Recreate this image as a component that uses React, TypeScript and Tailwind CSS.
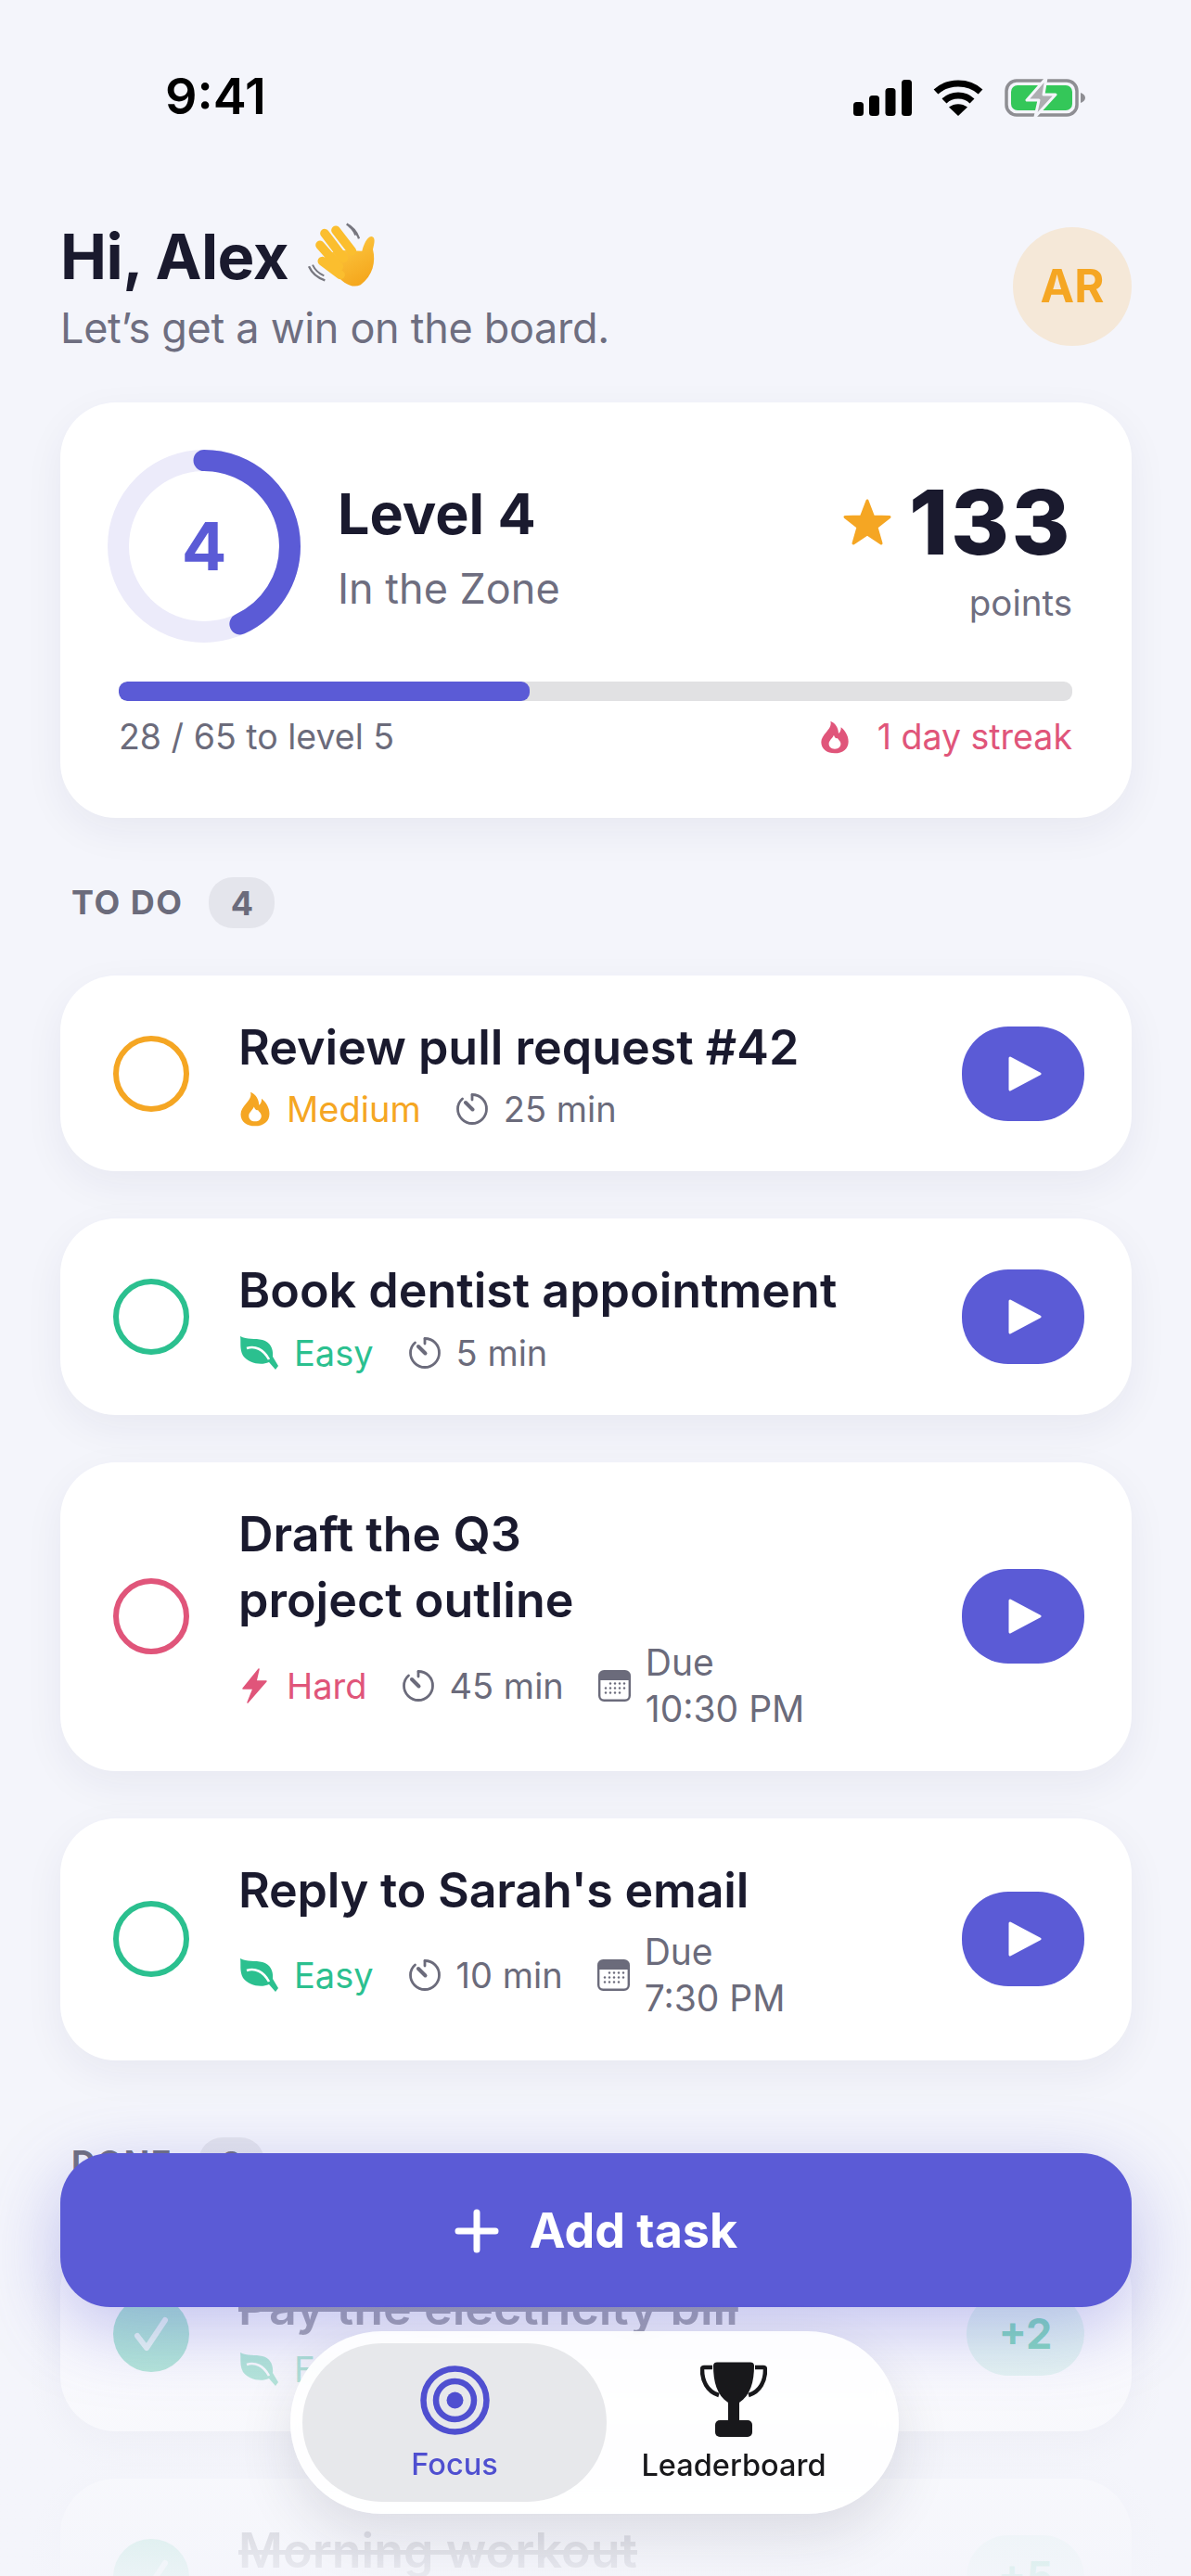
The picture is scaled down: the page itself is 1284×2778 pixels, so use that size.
import React from 'react';

const INDIGO = '#5B5BD6';

// status bar glyphs
const Signal = () => (
    <svg width="63" height="39" viewBox="0 0 63 39" fill="#000">
        <rect x="0" y="24" width="11" height="15" rx="3.5" />
        <rect x="17" y="17" width="11" height="22" rx="3.5" />
        <rect x="34.5" y="9" width="11" height="30" rx="3.5" />
        <rect x="52" y="0" width="11" height="39" rx="3.5" />
    </svg>
);

const Wifi = () => (
    <svg width="54" height="39" viewBox="0 0 54 39" fill="none" stroke="#000" strokeWidth="7">
        <path d="M3 13 C16 1 38 1 51 13" />
        <path d="M12 23 C20 15 34 15 42 23" />
        <path d="M27 39 L17 29.5 C23 25 31 25 37 29.5 Z" fill="#000" stroke="none" />
    </svg>
);

const Battery = () => (
    <svg width="88" height="44" viewBox="0 0 88 44" fill="none">
        <rect x="2" y="4" width="76" height="37" rx="11" stroke="#8E8E93" strokeWidth="3.5" />
        <rect x="7" y="9" width="66" height="27" rx="7" fill="#34C759" />
        <path d="M82 17 C85 18 87 20 87 22.5 C87 25 85 27 82 28 Z" fill="#8E8E93" />
        <path d="M45 1 L24 25 H37 L33 43 L55 19 H42 Z" fill="#AEAEB2" stroke="#F4F5FB" strokeWidth="3" strokeLinejoin="round" />
    </svg>
);

const WaveHand = () => (
    <svg width="100" height="100" viewBox="0 0 300 300" fill="none" className="ml-[11px] shrink-0">
        <defs>
            <linearGradient id="hand" x1="0" y1="0" x2="0.6" y2="1">
                <stop offset="0" stopColor="#FFD04A" />
                <stop offset="1" stopColor="#F5A81E" />
            </linearGradient>
        </defs>
        <path d="M155 8 C175 18 188 35 195 55" stroke="#77777f" strokeWidth="7" />
        <path d="M33 145 C42 165 60 182 85 190" stroke="#77777f" strokeWidth="7" />
        <path d="M45 140 C52 155 65 168 82 175" stroke="#77777f" strokeWidth="6" />
        <path d="M162 14 C172 22 180 32 184 44" stroke="#77777f" strokeWidth="6" />
        <path
            d="M120 92 L205 95 C210 75 220 50 235 48 C250 50 245 70 240 90 C250 130 240 175 200 205 C170 218 140 195 120 170 L70 125 Z"
            fill="url(#hand)"
        />
        <g stroke="#FBBE2E" strokeWidth="29" strokeLinecap="round">
            <line x1="120" y1="28" x2="172" y2="95" />
            <line x1="84" y1="38" x2="145" y2="118" />
            <line x1="69" y1="76" x2="130" y2="145" />
            <line x1="76" y1="128" x2="135" y2="172" />
        </g>
    </svg>
);

// meta icons
const Flame = ({ color, w = 36, h = 40 }: { color: string; w?: number; h?: number }) => (
    <svg width={w} height={h} viewBox="0 0 24 27" className="shrink-0">
        <path
            fillRule="evenodd"
            fill={color}
            d="M8.5 0.5 C9.5 4 7.5 6.5 5 9.5 C2.8 12.2 1 14.5 1 17.5 C1 23 5.5 26.5 12 26.5 C18.5 26.5 23 23 23 17 C23 12 20 8 17 5.5 C17 8 16.5 9.5 15 10.5 C15 6 12.5 2 8.5 0.5 Z M12 23 C9 23 7.2 21.2 7.2 18.8 C7.2 16.2 9.8 14.8 11.2 11.8 C12 14.2 13.2 14.8 14.2 14.2 C14.4 15.2 16.8 16.5 16.8 18.8 C16.8 21.2 15 23 12 23 Z"
        />
    </svg>
);

const Leaf = ({ color }: { color: string }) => (
    <svg width="44" height="38" viewBox="0 0 44 38" className="shrink-0">
        <path
            fill={color}
            d="M2 1 C9 5 18 3 26 5 C34 7 38 14 37 23 L43 33 L40 37 L33 29 C24 33 11 30 5 22 C1 15 3 7 2 1 Z"
        />
        <path d="M9 14 C18 11 27 15 33 26" stroke="#fff" strokeWidth="2.6" fill="none" />
    </svg>
);

const Bolt = ({ color }: { color: string }) => (
    <svg width="36" height="38" viewBox="0 0 36 38" className="shrink-0">
        <path
            fill={color}
            stroke={color}
            strokeWidth="1.5"
            strokeLinejoin="round"
            d="M22 1 L5 22 H16 L10 37 L30 14 H19 Z"
        />
    </svg>
);

const Timer = () => (
    <svg width="36" height="36" viewBox="0 0 36 36" fill="none" stroke="#6B6B7B" className="shrink-0">
        <path d="M18 2.5 C27 2.5 33.5 9.5 33.5 18 C33.5 26.5 26.5 33.5 18 33.5 C9.5 33.5 2.5 26.5 2.5 18 C2.5 13.5 4.5 9.5 7.5 7" strokeWidth="2.8" strokeLinecap="round" />
        <path d="M18 3 V8" strokeWidth="2.8" strokeLinecap="round" />
        <path d="M11 11 L18.5 18.5" strokeWidth="4" strokeLinecap="round" />
    </svg>
);

const CalendarIcon = () => (
    <svg width="35" height="34" viewBox="0 0 35 34" className="shrink-0">
        <rect x="1.2" y="1.2" width="32.6" height="31.6" rx="5" fill="#fff" stroke="#6B6B7B" strokeWidth="2.4" />
        <path d="M1.2 11 V6 C1.2 3 3 1.2 6 1.2 H29 C32 1.2 33.8 3 33.8 6 V11 Z" fill="#6B6B7B" />
        <g fill="#6B6B7B">
            {[14.5, 19.5, 24.5].map(y =>
                [8, 13, 18, 23, 28].map(x => (y === 14.5 && x === 8) || (y === 24.5 && x === 28) ? null : <circle key={`${x}-${y}`} cx={x} cy={y} r="1.2" />)
            )}
        </g>
    </svg>
);

const Play = () => (
    <svg width="36" height="40" viewBox="0 0 36 40" className="ml-[4px]">
        <path d="M2 3 L34 20 L2 37 Z" fill="#fff" stroke="#fff" strokeWidth="3" strokeLinejoin="round" />
    </svg>
);

const Meta = ({ icon, children, color }: { icon: React.ReactNode; children: React.ReactNode; color?: string }) => (
    <div className="flex items-center gap-[16px]" style={color ? { color } : undefined}>
        {icon}
        <span>{children}</span>
    </div>
);

interface TaskProps {
    ring: string;
    title: React.ReactNode;
    icon: React.ReactNode;
    level: string;
    levelColor: string;
    mins: string;
    due?: string;
}

const TaskCard = ({ ring, title, icon, level, levelColor, mins, due }: TaskProps) => (
    <div className="flex items-center rounded-[60px] bg-white pl-[57px] pr-[51px] py-[42px] shadow-[0_14px_44px_rgba(40,40,90,0.06)]">
        <div className="h-[82px] w-[82px] shrink-0 rounded-full border-[6px]" style={{ borderColor: ring }} />
        <div className="ml-[53px] min-w-0 flex-1">
            <div className="text-[52px] font-semibold leading-[71.4px] text-[#1A1A2E]">{title}</div>
            <div className="mt-[6px] flex items-center gap-[37px] text-[38px] leading-[50px] text-[#6B6B7B]">
                <Meta icon={icon} color={levelColor}>{level}</Meta>
                <Meta icon={<Timer />}>{mins}</Meta>
                {due && <Meta icon={<CalendarIcon />}><span className="text-[39px]">Due<br />{due}</span></Meta>}
            </div>
        </div>
        <button className="flex h-[102px] w-[132px] shrink-0 items-center justify-center rounded-[50px] bg-[#5B5BD6]">
            <Play />
        </button>
    </div>
);

const DoneCard = ({ title, meta, points }: { title: string; meta: string; points: string }) => (
    <div className="flex items-center rounded-[60px] bg-white/70 pl-[57px] pr-[51px] py-[42px] shadow-[0_14px_44px_rgba(40,40,90,0.06)]">
        <div className="flex h-[82px] w-[82px] shrink-0 items-center justify-center rounded-full bg-[#2BC08F]/50">
            <svg width="40" height="40" viewBox="0 0 40 40" fill="none" stroke="#fff" strokeOpacity="0.75" strokeWidth="6" strokeLinecap="round" strokeLinejoin="round">
                <path d="M5 22 L15 35 L35 5" />
            </svg>
        </div>
        <div className="ml-[53px] min-w-0 flex-1 opacity-50">
            <div className="text-[52px] font-semibold leading-[71.4px] text-[#1A1A2E] line-through">{title}</div>
            <div className="mt-[6px] flex items-center gap-[37px] text-[38px] leading-[50px] text-[#6B6B7B]">
                <Meta icon={<Leaf color="#2BC08F" />} color="#2BC08F">Easy</Meta>
                <Meta icon={<Timer />}>{meta}</Meta>
            </div>
        </div>
        <div className="flex h-[90px] w-[127px] shrink-0 items-center justify-center rounded-[45px] bg-[#2BC08F]/15 text-[45px] font-bold text-[#2BC08F]/75">
            {points}
        </div>
    </div>
);

const SectionHead = ({ label, count }: { label: string; count: number }) => (
    <div className="flex items-center pl-[12px]">
        <span className="text-[36px] font-bold leading-[55px] tracking-[1.5px] text-[#6B6B7B]">{label}</span>
        <span className="ml-[28px] flex h-[55px] w-[71px] items-center justify-center rounded-[26px] bg-[#E4E5EC] text-[36px] font-bold text-[#6B6B7B]">{count}</span>
    </div>
);

const Trophy = () => (
    <svg width="72" height="82" viewBox="0 0 72 82">
        <path d="M13 6 H4 C2.500 6 2 7 2 8.500 C2 20 7 32 20 36" fill="none" stroke="#18181B" strokeWidth="4.500" />
        <path d="M59 6 H68 C69.500 6 70 7 70 8.500 C70 20 65 32 52 36" fill="none" stroke="#18181B" strokeWidth="4.500" />
        <path d="M14 4 C14 1.500 16 0.500 18 0.500 H54 C56 0.500 58 1.500 58 4 C58 22 54 36 42 44 V66 H30 V44 C18 36 14 22 14 4 Z" fill="#18181B" />
        <rect x="16" y="63" width="40" height="18" rx="5" fill="#18181B" />
    </svg>
);

const Target = () => (
    <svg width="75" height="75" viewBox="0 0 75 75" fill="none" stroke="#4F4FD0" strokeWidth="6.500">
        <circle cx="37.500" cy="37.500" r="34" />
        <circle cx="37.500" cy="37.500" r="20.500" />
        <circle cx="37.500" cy="37.500" r="9" fill="#4F4FD0" stroke="none" />
    </svg>
);

export default function App() {
    return (
        <div className="relative h-[2778px] w-[1284px] overflow-hidden bg-[#F4F5FB] font-['Inter',sans-serif]">
            {/* Status bar */}
            <div className="flex h-[245px] items-start justify-between pl-[178px] pr-[113px] pt-[74px]">
                <span className="text-[54px] font-semibold leading-[60px] text-black">9:41</span>
                <div className="mt-[9px] flex items-center gap-[23px]">
                    <Signal />
                    <Wifi />
                    <Battery />
                </div>
            </div>

            <div className="px-[65px] pr-[64px]">
                {/* Greeting */}
                <div className="flex h-[189px] items-start justify-between">
                    <div>
                        <div className="-mt-[6px] flex h-[100px] items-start">
                            <span className="text-[67px] font-bold leading-[76px] tracking-[-0.5px] text-[#1A1A2E]">Hi, Alex</span>
                            <WaveHand />
                        </div>
                        <div className="-mt-[15px] text-[45px] leading-[60px] tracking-[-0.3px] text-[#6E6E80]">Let’s get a win on the board.</div>
                    </div>
                    <div className="flex h-[128px] w-[128px] items-center justify-center rounded-full bg-[#F5E8D8] text-[49px] font-bold text-[#F5A623]">AR</div>
                </div>

                {/* Level card */}
                <div className="rounded-[60px] bg-white pb-[62px] pl-[63px] pr-[64px] pt-[51px] shadow-[0_14px_44px_rgba(40,40,90,0.06)]">
                    <div className="flex items-center">
                        <div className="relative -ml-[12px] h-[208px] w-[208px] shrink-0">
                            <svg width="208" height="208" viewBox="0 0 208 208" fill="none" strokeWidth="23">
                                <circle cx="104" cy="104" r="92.500" stroke="#ECEBFA" />
                                <circle cx="104" cy="104" r="92.500" stroke={INDIGO} strokeLinecap="round" strokeDasharray="250 581.200" transform="rotate(-90 104 104)" />
                            </svg>
                            <div className="absolute inset-0 flex items-center justify-center text-[72px] font-bold text-[#5B5BD6]">4</div>
                        </div>
                        <div className="ml-[40px] mt-[5px] flex-1">
                            <div className="text-[61px] font-bold leading-[72px] text-[#1A1A2E]">Level 4</div>
                            <div className="mt-[15px] text-[45px] leading-[60px] text-[#6E6E80]">In the Zone</div>
                        </div>
                        <div className="mt-[10px] text-right">
                            <div className="flex items-center justify-end gap-[18px]">
                                <svg width="54" height="52" viewBox="0 0 54 52">
                                    <path d="M27 3 L33.500 20 L51 20.500 L37 31.500 L42 49 L27 39 L12 49 L17 31.500 L3 20.500 L20.500 20 Z" fill="#F5A623" stroke="#F5A623" strokeWidth="3" strokeLinejoin="round" />
                                </svg>
                                <span className="text-[96px] font-extrabold leading-[100px] tracking-[2.5px] text-[#1A1A2E]">133</span>
                            </div>
                            <div className="mt-[12px] text-[38.5px] leading-[50px] text-[#6E6E80]">points</div>
                        </div>
                    </div>
                    <div className="mt-[42px] h-[21px] overflow-hidden rounded-[9px] bg-[#E1E1E3]">
                        <div className="h-full rounded-[9px] bg-[#5B5BD6]" style={{ width: `${(443 / 1028) * 100}%` }} />
                    </div>
                    <div className="mt-[14px] flex items-center justify-between text-[37.5px] leading-[50px] text-[#6B6B7B]">
                        <span>28 / 65 to level 5</span>
                        <div className="flex items-center gap-[30px] text-[#E0557A]">
                            <Flame color="#E0557A" w={32} h={40} />
                            <span>1 day streak</span>
                        </div>
                    </div>
                </div>

                {/* To do */}
                <div className="mt-[64px]">
                    <SectionHead label="TO DO" count={4} />
                </div>
                <div className="mt-[51px] flex flex-col gap-[51px]">
                    <TaskCard ring="#F5A623" title="Review pull request #42" icon={<Flame color="#F5A623" w={36} h={38} />} level="Medium" levelColor="#F5A623" mins="25 min" />
                    <TaskCard ring="#2BC08F" title="Book dentist appointment" icon={<Leaf color="#2BC08F" />} level="Easy" levelColor="#2BC08F" mins="5 min" />
                    <TaskCard ring="#E0557A" title={<>Draft the Q3<br />project outline</>} icon={<Bolt color="#E0557A" />} level="Hard" levelColor="#E0557A" mins="45 min" due="10:30 PM" />
                    <TaskCard ring="#2BC08F" title={<span className="tracking-[-0.2px]">Reply to Sarah's email</span>} icon={<Leaf color="#2BC08F" />} level="Easy" levelColor="#2BC08F" mins="10 min" due="7:30 PM" />
                </div>

                {/* Done */}
                <div className="mt-[83px]">
                    <SectionHead label="DONE" count={2} />
                </div>
                <div className="mt-[51px] flex flex-col gap-[51px]">
                    <DoneCard title="Pay the electricity bill" meta="15 min" points="+2" />
                    <DoneCard title="Morning workout" meta="30 min" points="+5" />
                </div>
            </div>

            {/* fade over the list */}
            <div className="pointer-events-none absolute bottom-0 left-0 right-0 h-[480px] bg-gradient-to-b from-[#F4F5FB]/0 via-[#F4F5FB]/30 to-[#F4F5FB]/90" />

            {/* Floating actions */}
            <div className="absolute left-[65px] right-[64px] top-[2322px] flex flex-col gap-[26px]">
                <button className="flex h-[166px] w-full items-center justify-center gap-[33px] rounded-[54px] bg-[#5B5BD6] pt-[2px] text-[52px] font-bold text-white shadow-[0_24px_80px_rgba(91,91,214,0.36)]">
                    <svg width="48" height="48" viewBox="0 0 48 48" stroke="#fff" strokeWidth="7" strokeLinecap="round">
                        <path d="M24 4 V44 M4 24 H44" />
                    </svg>
                    Add task
                </button>
                <div className="ml-[248px] flex h-[197px] w-[656px] items-center rounded-full bg-white/90 pl-[13px] shadow-[0_24px_60px_rgba(30,30,60,0.12)] backdrop-blur-md">
                    <div className="flex h-[171px] w-[328px] flex-col items-center justify-center rounded-full bg-[#E4E5E9]/90 pt-[4px]">
                        <Target />
                        <span className="mt-[12px] text-[32.5px] font-medium leading-[40px] text-[#4F4FD0]">Focus</span>
                    </div>
                    <div className="flex h-[171px] w-[274px] flex-col items-center justify-center">
                        <Trophy />
                        <span className="mt-[10px] text-[32.5px] font-medium leading-[40px] text-[#18181B]">Leaderboard</span>
                    </div>
                </div>
            </div>
        </div>
    );
}
